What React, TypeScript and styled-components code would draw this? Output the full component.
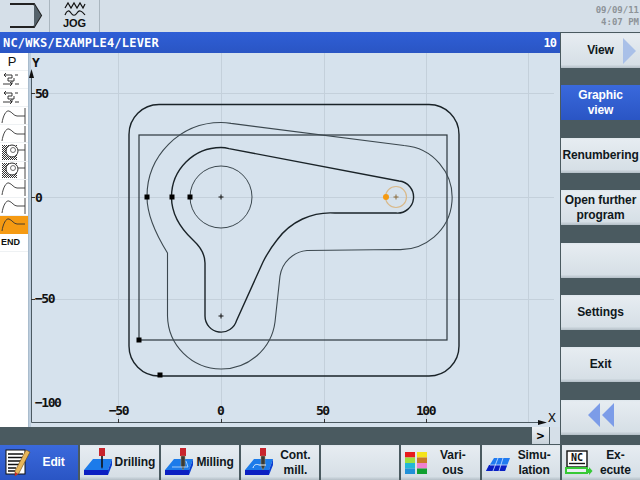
import React from "react";
import styled, { createGlobalStyle } from "styled-components";

const GlobalStyle = createGlobalStyle`
    html, body {
        margin: 0;
        padding: 0;
        background: #4a5a60;
    }
    body {
        font-family: "Liberation Sans", sans-serif;
    }
`;

const Screen = styled.div`
    width: 640px;
    height: 480px;
    display: grid;
    grid-template-columns: 560px 80px;
    grid-template-rows: 32px 395px 18px 35px;
    overflow: hidden;
    background: #4a5a60;
`;

const TopBar = styled.header`
    grid-column: 1 / 3;
    display: flex;
    background: #d5dfe8;
`;

const TopCell = styled.div`
    width: 49px;
    border-right: 1px solid #aab6bf;
    display: flex;
    flex-direction: column;
    align-items: center;
    font-size: 11px;
    font-weight: 700;
    line-height: 11px;
    color: #111;
`;

const DateBox = styled.div`
    margin-left: auto;
    padding: 4px 1px 0 0;
    font-family: "DejaVu Sans Mono", monospace;
    font-size: 9px;
    font-weight: 700;
    line-height: 12px;
    text-align: right;
    color: #8d9398;
`;

const WorkArea = styled.main`
    display: flex;
    flex-direction: column;
    min-height: 0;
`;

const TitleBar = styled.div`
    height: 21px;
    flex: none;
    display: flex;
    align-items: center;
    justify-content: space-between;
    padding: 0 4px 0 3px;
    background: linear-gradient(#2f5fd6, #2a55c4);
    color: #fff;
    font-family: "DejaVu Sans Mono", monospace;
    font-size: 12px;
    font-weight: 700;
    letter-spacing: 0.2px;
`;

const CountLabel = styled.span`
    letter-spacing: -1px;
`;

const Body = styled.div`
    flex: 1;
    display: flex;
    min-height: 0;
`;

const BlockList = styled.div`
    width: 28px;
    flex: none;
    background: #fff;
    display: flex;
    flex-direction: column;
`;

const BlockRow = styled.div<{ $active?: boolean }>`
    height: 18.1px;
    flex: none;
    display: flex;
    align-items: center;
    padding-left: 1px;
    font-size: 9px;
    font-weight: 700;
    color: #111;
    background: ${(p) => (p.$active ? "#f59a12" : "transparent")};
    border-bottom: 1px solid ${(p) => (p.$active ? "#f59a12" : "#eef1f3")};
    box-sizing: border-box;
`;

const PLabel = styled(BlockRow)`
    justify-content: center;
    font-weight: 400;
    font-size: 13px;
    padding: 0 4px 0 0;
`;

const ChartPane = styled.div`
    width: 532px;
    flex: none;
    background: #d6e2ed;
    border-left: 1px solid #a9bccd;
    box-sizing: border-box;
    display: flex;
`;

const ScrollRow = styled.div`
    grid-column: 1;
    display: flex;
    justify-content: flex-end;
    background: #4a5a60;
`;

const ScrollButton = styled.div`
    width: 17px;
    height: 17px;
    display: flex;
    align-items: center;
    justify-content: center;
    background: linear-gradient(#eef2f5, #c8d2da);
    color: #000;
    font-family: "DejaVu Sans Mono", monospace;
    font-size: 13px;
    font-weight: 700;
`;

const ScrollEnd = styled.div`
    width: 10px;
    height: 17px;
    margin-left: 1px;
    background: #d5dfe8;
`;

const SideColumn = styled.aside`
    grid-column: 2;
    grid-row: 2 / 4;
    display: flex;
    flex-direction: column;
    gap: 17.4px;
    padding: 1px 0 0 1px;
    box-sizing: border-box;
`;

const SoftKey = styled.button<{ $active?: boolean }>`
    flex: none;
    margin: 0;
    border: 0;
    padding: 0;
    font-family: inherit;
    font-size: 12px;
    font-weight: 700;
    letter-spacing: -0.1px;
    line-height: 15px;
    white-space: nowrap;
    color: ${(p) => (p.$active ? "#fff" : "#10181c")};
    background: ${(p) =>
        p.$active
            ? "linear-gradient(#3a69dc, #2a55c4)"
            : "linear-gradient(#dfe7ed 0%, #e6ecf1 6%, #d6dfe6 90%, #b4bfc7 100%)"};
`;

const VerticalKey = styled(SoftKey)`
    width: 79px;
    height: 35px;
    position: relative;
`;

const ViewArrow = styled.svg`
    position: absolute;
    right: 3px;
    top: 5px;
`;

const BottomBar = styled.nav`
    grid-column: 1 / 3;
    display: flex;
    gap: 2px;
`;

const BottomKey = styled(SoftKey)`
    flex: 1;
    height: 35px;
    display: flex;
    align-items: center;
    padding: 0 2px 0 3px;
`;

const KeyLabel = styled.span`
    flex: 1;
    text-align: center;
`;

function WorkpieceIcon({ kind }: { kind: "drill" | "mill" | "cont" | "sim" }) {
    if (kind === "sim") {
        return (
            <svg width="26" height="22" viewBox="0 0 26 22">
                <path d="M1 19 L9 6 H25 L20 19 Z" fill="#1f7af0" />
                <path d="M1 19 L4 13 H22 L20 19 Z" fill="#0a1fc4" />
                <path d="M5 13 H23 M13 6 L8 19 M18 6 L14 19" stroke="#cfe3ff" strokeWidth="0.8" fill="none" />
            </svg>
        );
    }
    return (
        <svg width="30" height="31" viewBox="0 0 30 31">
            <path d="M1 28 L1 23 L10 12 H29 L25 23 V28 Z" fill="#1c7bea" />
            <path d="M1 23 H25 V28 H1 Z" fill="#0b1fc2" />
            <path d="M25 23 L29 12 V18 L25 28 Z" fill="#0b3fd2" />
            <rect x="16" y="1" width="6" height="8" fill="#c8242c" />
            {kind === "drill" ? (
                <path d="M18.2 9 H19.8 V20 L19 22 L18.2 20 Z" fill="#111" />
            ) : (
                <path d="M17 9 H21 V19 L19 23 L17 19 Z" fill="#3a3a34" stroke="#9a9a7a" strokeWidth="0.5" />
            )}
            {kind === "mill" && <path d="M8 20 H24 M22 14 L24 20" stroke="#bfe0ff" strokeWidth="0.8" fill="none" />}
            {kind === "cont" && <path d="M9 21 C10 17 13 17 15 18 H22" stroke="#e6f3ff" strokeWidth="1" fill="none" />}
        </svg>
    );
}

function EditIcon() {
    return (
        <svg width="28" height="30" viewBox="-2 0 28 30">
            <rect x="1" y="2" width="19" height="24" fill="#fff" stroke="#111" />
            <path d="M3 6 H18 M3 9.5 H18 M3 13 H18 M3 16.5 H14 M3 20 H11 M3 23 H10" stroke="#111" strokeWidth="1.5" />
            <path d="M21 2 L25 4 L14 25 L10 28 L10 23 Z" fill="#e8b65a" stroke="#6b4a12" strokeWidth="0.6" />
            <path d="M10 28 L10 24 L13 26 Z" fill="#c8242c" />
        </svg>
    );
}

function VariousIcon() {
    const cells = ["#e81c1c", "#f4e41c", "#9ce040", "#c87a28", "#20b8d8", "#f080d0", "#2090d8", "#10a030"];
    return (
        <svg width="24" height="24" viewBox="0 0 24 24">
            {cells.map((c, i) => (
                <rect key={c} x={i % 2 ? 13 : 1} y={1 + Math.floor(i / 2) * 5.5} width="10" height="5.5" fill={c} />
            ))}
        </svg>
    );
}

function ExecuteIcon() {
    return (
        <svg width="28" height="28" viewBox="0 0 28 28">
            <rect x="2" y="2" width="20" height="16" fill="#fff" stroke="#111" strokeWidth="1.4" />
            <text x="12" y="12" textAnchor="middle" fontFamily="DejaVu Sans Mono" fontWeight="700" fontSize="10" fill="#111">NC</text>
            <path d="M4 14.5 H20" stroke="#111" strokeWidth="1.4" />
            <path d="M1 19 H22 V24 H1 Z" fill="#e8eef2" stroke="#36c936" strokeWidth="2" />
            <path d="M21 20 H24 V18 L27.5 22 L24 26 V24 H21 Z" fill="#36c936" />
        </svg>
    );
}

function StepIcon() {
    return (
        <svg width="20" height="15" viewBox="0 0 20 15">
            <path d="M3 3 H11 V6 H7 V9 H13 V6 M5 1 L3 3 L5 5 M2 12 H11 V9 M9 14 L11 12 L9 10 M14 3 H17 M14 12 H18" stroke="#222" fill="none" strokeWidth="0.9" />
        </svg>
    );
}

function CurveIcon({ bracket }: { bracket?: boolean }) {
    return (
        <svg width="27" height="16" viewBox="0 0 27 16">
            <path d="M1 15 C2 8 5 2 8 3 C11 4 13 8 16 8 H20" stroke="#333" fill="none" strokeWidth="0.9" />
            <path d="M20 8 H24" stroke="#333" strokeWidth="0.9" />
            {bracket && <path d="M24 0 V16" stroke="#333" strokeWidth="0.9" />}
        </svg>
    );
}

function PocketIcon() {
    return (
        <svg width="27" height="17" viewBox="0 0 27 17">
            <defs>
                <pattern id="hatch" width="2" height="2" patternUnits="userSpaceOnUse">
                    <rect width="1" height="1" fill="#333" />
                    <rect x="1" y="1" width="1" height="1" fill="#333" />
                </pattern>
            </defs>
            <rect x="1" y="1" width="15" height="15" fill="url(#hatch)" />
            <circle cx="11" cy="7" r="6" fill="#fff" stroke="#333" />
            <circle cx="12" cy="6" r="2.5" fill="none" stroke="#333" strokeWidth="0.7" />
            <path d="M17 6 H24 V0 M24 6 V17" stroke="#333" fill="none" strokeWidth="0.9" />
        </svg>
    );
}

const BLOCKS = ["step", "step", "curve", "curve", "pocket", "pocket", "curve", "curve"];

const OX = 192; // chart origin, in the chart's coordinates
const OY = 144;

function Chart() {
    const gridX = [-103, 0, 103, 205, 307];
    const gridY = [-104, 0, 102];
    const squares = [
        [147, 197],
        [172, 197],
        [190, 197],
        [139, 340],
        [160, 375],
    ];
    return (
        <svg width="531" height="374" viewBox="0 0 531 374">
            <rect x="0" y="0" width="2" height="374" fill="#bccddd" />
            {gridX.map((x) => (
                <line key={x} x1={OX + x + 0.5} x2={OX + x + 0.5} y1="0" y2="370" stroke="#c4d0db" strokeWidth="1" />
            ))}
            {gridY.map((y) => (
                <line key={y} x1="3" x2="525" y1={OY + y + 0.5} y2={OY + y + 0.5} stroke="#c4d0db" strokeWidth="1" />
            ))}

            <path d="M2.5 20 V369.5 H512" fill="none" stroke="#4c5a62" />
            <path d="M2.5 16 L5 25 H0 Z" fill="#111" />
            <path d="M518 369.5 L509 367 V372 Z" fill="#111" />
            {[-104, 0, 102].map((y) => (
                <line key={y} x1="2" x2="6" y1={OY + y + 0.5} y2={OY + y + 0.5} stroke="#333" />
            ))}
            {gridX.slice(0, 4).map((x) => (
                <line key={x} x1={OX + x + 0.5} x2={OX + x + 0.5} y1="366" y2="370" stroke="#333" />
            ))}

            <g fontFamily="DejaVu Sans Mono, monospace" fontWeight="700" fontSize="13" fill="#111">
                <text x="3" y="14">Y</text>
                <text x="6" y="45" letterSpacing="-1.5">50</text>
                <text x="6" y="149" letterSpacing="-1.5">0</text>
                <text x="6" y="250" letterSpacing="-1.5">−50</text>
                <text x="6" y="354" letterSpacing="-1.5">−100</text>
                <text x="80" y="362" letterSpacing="-1.5">−50</text>
                <text x="188" y="362" letterSpacing="-1.5">0</text>
                <text x="287" y="362" letterSpacing="-1.5">50</text>
                <text x="387" y="362" letterSpacing="-1.5">100</text>
                <text x="519" y="369" fontWeight="400">X</text>
            </g>

            <g fill="none" transform="translate(-29 -53)">
                <rect x="129" y="104.5" width="330" height="271.5" rx="30" stroke="#1a2328" strokeWidth="1.4" />
                <rect x="139" y="135" width="308" height="205" stroke="#2b363c" strokeWidth="1.2" />
                <circle cx="221" cy="197" r="31" stroke="#3b474e" strokeWidth="1" />
                <path
                    d="M171.5 197 A49.5 49.5 0 0 1 221 147.5 Q225 147.5 229 148.6 L399 181 A16 16 0 0 1 396 213 L335 213 A66 66 0 0 0 277 240 Q269 250 263 262 L236.6 320.4 A16.1 16.1 0 0 1 205 316 L205 263 Q205 251 193 240 Q171.5 220 171.5 197 Z"
                    stroke="#1a2328"
                    strokeWidth="1.4"
                />
                <path
                    d="M147 197 A74 74 0 0 1 221 122.5 Q226 122.5 231 123.4 L404 145.5 A52 52 0 0 1 396 249.5 L307 250.5 A30 30 0 0 0 280 276 L275 322 A54 54 0 0 1 221 369 A54 54 0 0 1 167.5 316 L167.5 253 Q147 220 147 197 Z"
                    stroke="#3c484f"
                    strokeWidth="1.1"
                />
                <circle cx="396" cy="197" r="10.5" stroke="#d9b98a" strokeWidth="1.2" />
                <circle cx="386" cy="197" r="3" fill="#f59a12" />
                <path d="M393.5 197 H398.5 M396 194.5 V199.5" stroke="#8a6a3a" strokeWidth="1" />
                <path d="M218.5 197 H223.5 M221 194.5 V199.5 M218.5 316 H223.5 M221 313.5 V318.5" stroke="#111" strokeWidth="1" />
            </g>
            {squares.map(([x, y]) => (
                <rect key={`${x}-${y}`} x={x - 29 - 2.5} y={y - 53 - 2.5} width="5" height="5" fill="#000" />
            ))}
        </svg>
    );
}

export default function App() {
    return (
        <Screen>
            <GlobalStyle />
            <TopBar>
                <TopCell>
                    <svg width="49" height="32" viewBox="0 0 49 32">
                        <path d="M10 4 H34 L41 15.5 L34 27 H10" fill="none" stroke="#222" strokeWidth="2" />
                        <path d="M34 4 L41 15.5 L34 27 Z" fill="#55626a" />
                    </svg>
                </TopCell>
                <TopCell>
                    <svg width="22" height="18" viewBox="0 0 22 18">
                        <path d="M1 8 L4 3 L7 8 L10 3 L13 8 L16 3 L19 8 L21 4" fill="none" stroke="#111" strokeWidth="1.2" />
                        <path d="M1 15 C3 10 5 10 7 13 C9 16 11 16 13 13 C15 10 17 10 21 15" fill="none" stroke="#111" strokeWidth="1.2" />
                    </svg>
                    <span>JOG</span>
                </TopCell>
                <DateBox>
                    09/09/11
                    <br />
                    4:07 PM
                </DateBox>
            </TopBar>

            <WorkArea>
                <TitleBar>
                    <span>NC/WKS/EXAMPLE4/LEVER</span>
                    <CountLabel>10</CountLabel>
                </TitleBar>
                <Body>
                    <BlockList>
                        <PLabel>P</PLabel>
                        {BLOCKS.map((b, i) => (
                            <BlockRow key={i}>
                                {b === "step" && <StepIcon />}
                                {b === "curve" && <CurveIcon bracket />}
                                {b === "pocket" && <PocketIcon />}
                            </BlockRow>
                        ))}
                        <BlockRow $active>
                            <CurveIcon />
                        </BlockRow>
                        <BlockRow>END</BlockRow>
                    </BlockList>
                    <ChartPane>
                        <Chart />
                    </ChartPane>
                </Body>
            </WorkArea>

            <SideColumn>
                <VerticalKey>
                    View
                    <ViewArrow width="14" height="26" viewBox="0 0 14 26">
                        <path d="M0 0 L13 13 L0 26 Z" fill="#a9c0e8" />
                    </ViewArrow>
                </VerticalKey>
                <VerticalKey $active>
                    Graphic
                    <br />
                    view
                </VerticalKey>
                <VerticalKey>Renumbering</VerticalKey>
                <VerticalKey>
                    Open further
                    <br />
                    program
                </VerticalKey>
                <VerticalKey />
                <VerticalKey>Settings</VerticalKey>
                <VerticalKey>Exit</VerticalKey>
                <VerticalKey>
                    <svg width="28" height="24" viewBox="0 0 28 24">
                        <path d="M13 0 L1 12 L13 24 Z M27 0 L15 12 L27 24 Z" fill="#7c9ce8" />
                    </svg>
                </VerticalKey>
            </SideColumn>

            <ScrollRow>
                <ScrollButton>&gt;</ScrollButton>
                <ScrollEnd />
            </ScrollRow>

            <BottomBar>
                <BottomKey $active>
                    <EditIcon />
                    <KeyLabel>Edit</KeyLabel>
                </BottomKey>
                <BottomKey>
                    <WorkpieceIcon kind="drill" />
                    <KeyLabel>Drilling</KeyLabel>
                </BottomKey>
                <BottomKey>
                    <WorkpieceIcon kind="mill" />
                    <KeyLabel>Milling</KeyLabel>
                </BottomKey>
                <BottomKey>
                    <WorkpieceIcon kind="cont" />
                    <KeyLabel>
                        Cont.
                        <br />
                        mill.
                    </KeyLabel>
                </BottomKey>
                <BottomKey />
                <BottomKey>
                    <VariousIcon />
                    <KeyLabel>
                        Vari-
                        <br />
                        ous
                    </KeyLabel>
                </BottomKey>
                <BottomKey>
                    <WorkpieceIcon kind="sim" />
                    <KeyLabel>
                        Simu-
                        <br />
                        lation
                    </KeyLabel>
                </BottomKey>
                <BottomKey>
                    <ExecuteIcon />
                    <KeyLabel>
                        Ex-
                        <br />
                        ecute
                    </KeyLabel>
                </BottomKey>
            </BottomBar>
        </Screen>
    );
}
